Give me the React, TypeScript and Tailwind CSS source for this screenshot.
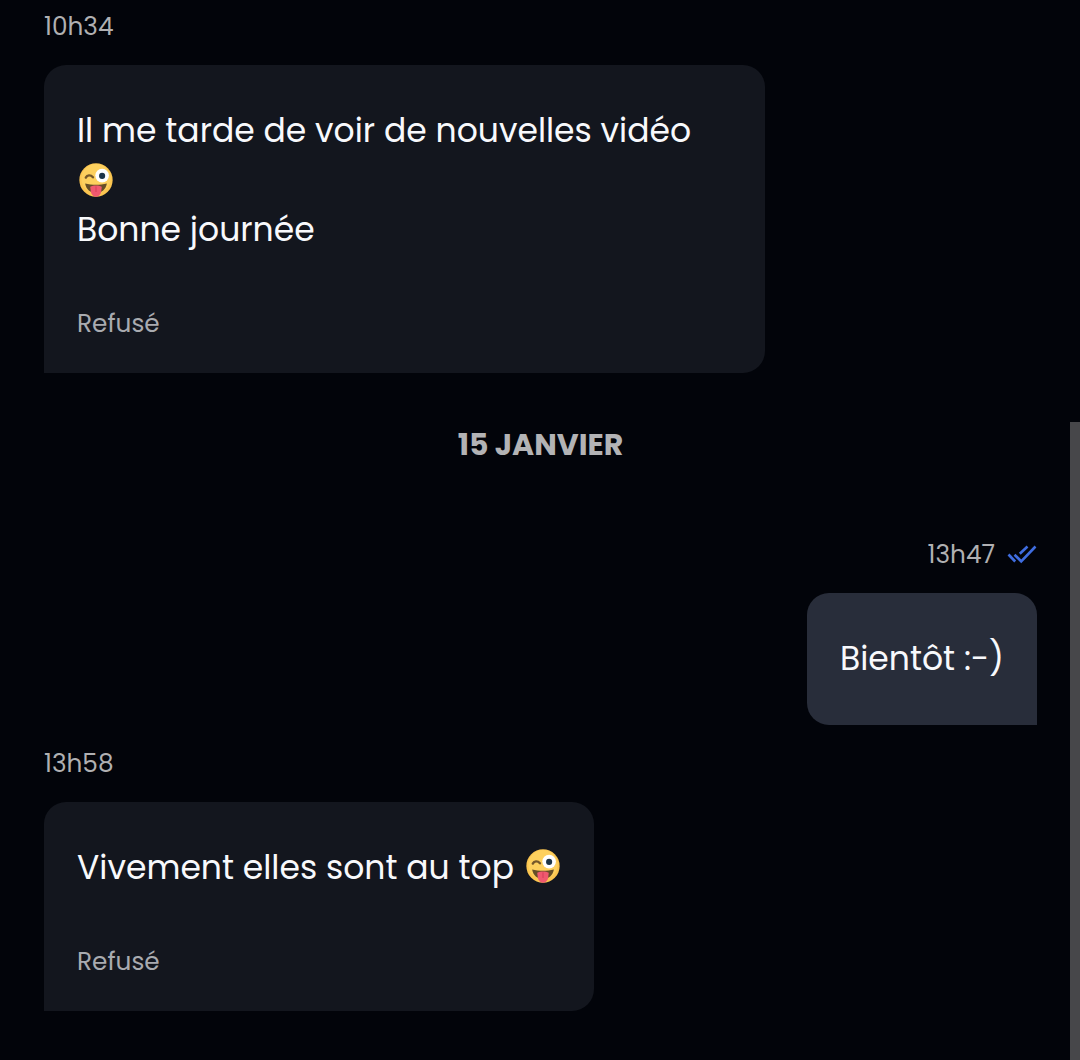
import clsx from "clsx";

const WinkEmoji = ({ className }: { className?: string }) => (
  <svg viewBox="0 0 100 100" className={clsx("inline-block w-[34px] h-[34px] shrink-0", className)} aria-label="😜">
    <circle cx="50" cy="50" r="49" fill="#fbc550" />
    <circle cx="50" cy="46" r="43" fill="#ffd768" opacity="0.6" />
    <path d="M20 43c4-8 14-9 21-1" fill="none" stroke="#75582a" strokeWidth="7" strokeLinecap="round" />
    <circle cx="68" cy="37" r="20" fill="#fff" />
    <circle cx="68" cy="38" r="9" fill="#1c3447" />
    <path d="M18 60c3 17 15 28 32 28s29-11 32-28c-20 5-44 5-64 0z" fill="#664e27" />
    <path d="M33 70c9-5 25-5 34 0l-2 15c-2 9-8 14-15 14s-13-5-15-14z" fill="#f0596f" />
    <path d="M50 70v14" stroke="#d63f5a" strokeWidth="3" strokeLinecap="round" />
  </svg>
);

const DoubleCheck = () => (
  <svg viewBox="0 0 30 20" className="w-[30px] h-5" fill="none" stroke="#3f6de0" strokeWidth="2.6">
    <path d="M1.500 9.500l6.700 7" />
    <path d="M7.500 9.700l6.700 6.600L28.500 1.500" />
    <path d="M12.800 8.700L20.500 1.500" />
  </svg>
);

const App = () => {
  return (
    <div className="flex h-[1060px] w-[1080px] overflow-hidden bg-[#02040a] font-['Poppins','Inter',sans-serif] text-[33px] leading-[49.5px] text-[#f8f9fc]">
      <main className="flex w-[1070px] flex-col pl-11 pr-[33px]">
        <time className="mt-[9px] h-[35px] text-[24.75px] leading-9 text-[#b0b0b2]">10h34</time>

        <section className="mt-[21px] h-[308px] w-[721px] rounded-[22px] rounded-bl-none bg-[#13161e] px-[33px] pt-[41px]">
          <p className="whitespace-nowrap">Il me tarde de voir de nouvelles vidéo</p>
          <p className="flex h-[49px] items-center pl-[2px]">
            <WinkEmoji />
          </p>
          <p className="whitespace-nowrap">Bonne journée</p>
          <p className="mt-[52px] text-[24.75px] leading-9 text-[#a9abb0]">Refusé</p>
        </section>

        <h2 className="mt-[49px] h-[45px] text-center text-[30px] leading-[45px] font-bold text-[#b3b3b5]">
          15 JANVIER
        </h2>

        <div className="mt-[70px] flex h-[35px] items-center justify-end gap-3 text-[24.75px] leading-9 text-[#b0b0b2]">
          <time>13h47</time>
          <DoubleCheck />
        </div>
        <section className="mt-[21px] h-[132px] w-[230px] self-end rounded-[22px] rounded-br-none bg-[#282d3a] px-[33px] pt-[41px]">
          <p className="whitespace-nowrap">Bientôt :-)</p>
        </section>

        <time className="mt-[21px] h-[35px] text-[24.75px] leading-9 text-[#b0b0b2]">13h58</time>
        <section className="mt-[21px] h-[209px] w-[550px] rounded-[22px] rounded-bl-none bg-[#13161e] px-[33px] pt-[41px]">
          <p className="flex items-center justify-between whitespace-nowrap">
            Vivement elles sont au top
            <WinkEmoji className="mr-px mb-[4px]" />
          </p>
          <p className="mt-[51px] text-[24.75px] leading-9 text-[#a9abb0]">Refusé</p>
        </section>
      </main>
      <div className="mt-[422px] w-[10px] bg-[#47474a]" />
    </div>
  );
};

export default App;
